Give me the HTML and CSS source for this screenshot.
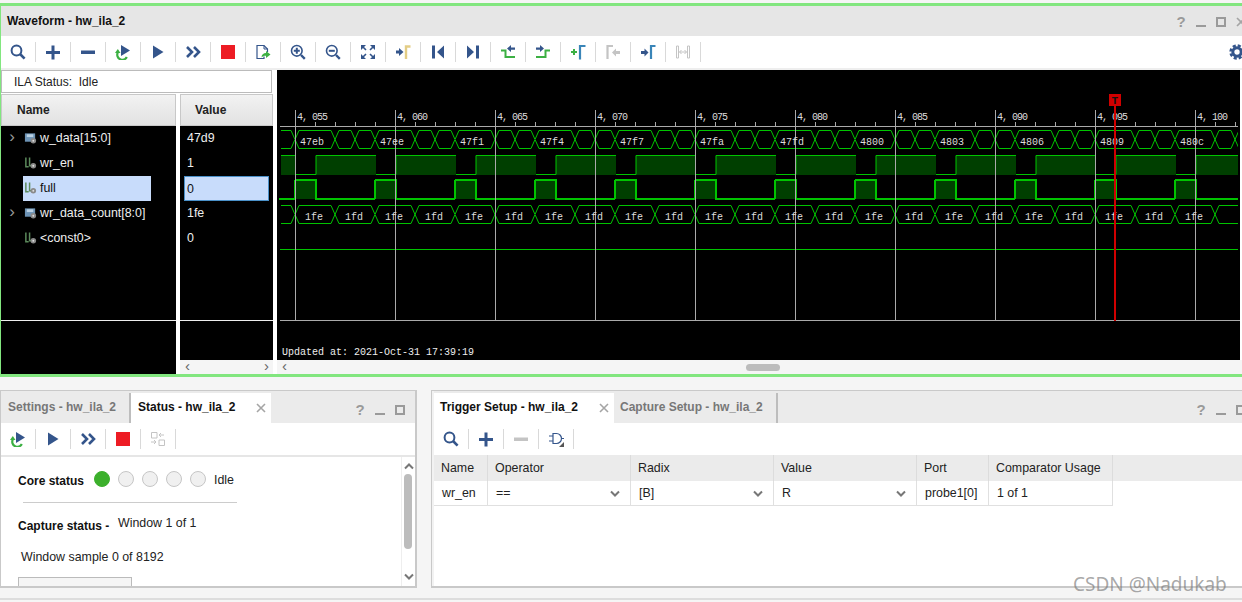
FILE: index.html
```html
<!DOCTYPE html>
<html lang="en">
<head>
<meta charset="utf-8">
<title>Waveform - hw_ila_2</title>
<link rel="stylesheet" href="styles.css">
</head>
<body>
<svg class="defs" width="0" height="0" aria-hidden="true">
  <defs>
    <symbol id="i-search" viewBox="0 0 16 16"><circle cx="6.5" cy="6.5" r="4.9" fill="none" stroke="#34558b" stroke-width="2"/><path d="M10 10l4.6 4.6" stroke="#34558b" stroke-width="2.6" fill="none"/></symbol>
    <symbol id="i-plus" viewBox="0 0 16 16"><path d="M1 7h14v3H1zM6.5 1.500h3v14h-3z" fill="#34558b"/></symbol>
    <symbol id="i-minus" viewBox="0 0 16 16"><path d="M1 6.500h14v3.500H1z" fill="#34558b"/></symbol>
    <symbol id="i-minus-off" viewBox="0 0 16 16"><path d="M1 6.500h14v3.500H1z" fill="#c4c4c4"/></symbol>
    <symbol id="i-rerun" viewBox="0 0 16 16"><path d="M6 1l9 5.500L6 12z" fill="#34558b"/><path d="M2.800 8.500a5 5 0 0 0 9 4.500" fill="none" stroke="#3cb043" stroke-width="2.200"/><path d="M0 9h5.500L2.800 5z" fill="#3cb043"/></symbol>
    <symbol id="i-play" viewBox="0 0 16 16"><path d="M3 1.500L13.500 8 3 14.500z" fill="#34558b"/></symbol>
    <symbol id="i-ffwd" viewBox="0 0 16 16"><path d="M2 3l5 5-5 5M9 3l5 5-5 5" fill="none" stroke="#34558b" stroke-width="2.600"/></symbol>
    <symbol id="i-stop" viewBox="0 0 16 16"><path d="M1 1h14v14H1z" fill="#ed1c24"/></symbol>
    <symbol id="i-export" viewBox="0 0 16 16"><path d="M9 12.500V14.500H2V1.500h7l3.500 3.500v3" fill="#fff" stroke="#34558b" stroke-width="1.200"/><path d="M9 1.500v3.500h3.500" fill="none" stroke="#34558b"/><path d="M6.500 13.500c0-3 2-4.500 4.500-4.500V7l4.500 3.500L11 14v-2.200c-2 0-3.500.5-4.500 1.700z" fill="#3cb043"/></symbol>
    <symbol id="i-zin" viewBox="0 0 16 16"><circle cx="6.800" cy="6.800" r="5.300" fill="none" stroke="#34558b" stroke-width="1.600"/><path d="M11 11l3.800 3.800" stroke="#34558b" stroke-width="2.400"/><path d="M3.800 5.800h6v2h-6zM5.800 3.800h2v6h-2z" fill="#34558b"/></symbol>
    <symbol id="i-zout" viewBox="0 0 16 16"><circle cx="6.800" cy="6.800" r="5.300" fill="none" stroke="#34558b" stroke-width="1.600"/><path d="M11 11l3.800 3.800" stroke="#34558b" stroke-width="2.400"/><path d="M3.800 5.800h6v2h-6z" fill="#34558b"/></symbol>
    <symbol id="i-fit" viewBox="0 0 16 16"><path d="M1 1h5L1 6zM15 1v5l-5-5zM1 15v-5l5 5zM15 15h-5l5-5z" fill="#34558b"/><path d="M3 3l3 3M13 3l-3 3M3 13l3-3M13 13l-3-3" stroke="#34558b" stroke-width="1.600"/></symbol>
    <symbol id="i-mark-tan" viewBox="0 0 16 16"><path d="M1 6.500h3V4l4.500 4L4 12V9.500H1z" fill="#34558b"/><path d="M11 15V2.500h4.500" fill="none" stroke="#e3cd86" stroke-width="2.400"/></symbol>
    <symbol id="i-first" viewBox="0 0 16 16"><path d="M2 1.500h3v13H2zM14 1.500v13L7 8z" fill="#34558b"/></symbol>
    <symbol id="i-last" viewBox="0 0 16 16"><path d="M11 1.500h3v13h-3zM2 1.500v13L9 8z" fill="#34558b"/></symbol>
    <symbol id="i-edge-prev" viewBox="0 0 16 16"><path d="M1 6.500h4.500V13H15" fill="none" stroke="#3cb043" stroke-width="2"/><path d="M15 3.500h-4V1L7 4.500 11 8V5.800h4z" fill="#34558b"/></symbol>
    <symbol id="i-edge-next" viewBox="0 0 16 16"><path d="M15 6.500h-4.500V13H1" fill="none" stroke="#3cb043" stroke-width="2"/><path d="M1 3.500h4V1l4 3.500L5 8V5.800H1z" fill="#34558b"/></symbol>
    <symbol id="i-add-mark" viewBox="0 0 16 16"><path d="M1 8h6M4 5v6" stroke="#3cb043" stroke-width="2"/><path d="M10 15.500V2h5.500" fill="none" stroke="#3a85b8" stroke-width="2.200"/></symbol>
    <symbol id="i-prev-mark" viewBox="0 0 16 16"><path d="M2.500 15V2H8" fill="none" stroke="#c4c4c4" stroke-width="2.200"/><path d="M15 7h-4V4.500L7 8.500l4 4V10h4z" fill="#c4c4c4"/></symbol>
    <symbol id="i-next-mark" viewBox="0 0 16 16"><path d="M1 7h3.500V4.500l4 4-4 4V10H1z" fill="#34558b"/><path d="M11 15V2h4.500" fill="none" stroke="#3a85b8" stroke-width="2.200"/></symbol>
    <symbol id="i-dist" viewBox="0 0 16 16"><path d="M1.500 2h2v12h-2zM12.500 2h2v12h-2z" fill="none" stroke="#c4c4c4"/><path d="M4.500 8h7M6.500 6l-2 2 2 2M9.500 6l2 2-2 2" fill="none" stroke="#c4c4c4"/></symbol>
    <symbol id="i-gear" viewBox="0 0 16 16"><circle cx="8" cy="8" r="4.200" fill="none" stroke="#34558b" stroke-width="3"/><circle cx="8" cy="8" r="6.500" fill="none" stroke="#34558b" stroke-width="2.400" stroke-dasharray="3.100 2"/></symbol>
    <symbol id="i-swap" viewBox="0 0 16 16"><path d="M1.500 1.500h5.500v5.500H1.500zM9 9h5.500v5.500H9z" fill="none" stroke="#c4c4c4"/><path d="M9 4h5M11 2l-2 2 2 2M1 11h5M4 9l2 2-2 2" fill="none" stroke="#c4c4c4"/></symbol>
    <symbol id="i-gate" viewBox="0 0 16 16"><path d="M5 2.500h3.500a5 5 0 0 1 0 10H5z" fill="none" stroke="#34558b" stroke-width="1.200"/><path d="M1 5h4M1 10h4M13.500 7.500H16" stroke="#34558b"/><path d="M16 16h-5l5-5z" fill="#555"/></symbol>
    <symbol id="i-bus" viewBox="0 0 14 14"><path d="M1 2h11v9H1z" fill="#6d93b5"/><path d="M3 3h7v3H3z" fill="#b9d0e2"/><circle cx="10" cy="10" r="3" fill="#8a8a8a"/><circle cx="10" cy="10" r="1" fill="#ddd"/></symbol>
    <symbol id="i-bit" viewBox="0 0 14 14"><path d="M2 1v10h3M6 1v9h3" fill="none" stroke="#5c8a5c" stroke-width="1.600"/><circle cx="10" cy="10" r="3" fill="#8a8a8a"/><circle cx="10" cy="10" r="1" fill="#ddd"/></symbol>
    <symbol id="i-close" viewBox="0 0 10 10"><path d="M1 1l8 8M9 1l-8 8" stroke="#a5a5a5" stroke-width="1.600"/></symbol>
    <symbol id="i-chev" viewBox="0 0 10 8"><path d="M1 1.500L5 5.500l4-4" fill="none" stroke="#777" stroke-width="2"/></symbol>
    <pattern id="p-data" patternUnits="userSpaceOnUse" x="295" y="0" width="80" height="400"><path class="w" d="M0 139.500L4 130.500H36L44 148.500H56L64 130.500H76L80 139.500M0 139.500L4 148.500H36L44 130.500H56L64 148.500H76L80 139.500"/></pattern>
    <pattern id="p-count" patternUnits="userSpaceOnUse" x="295" y="0" width="80" height="400"><path class="w" d="M0 214.500L4 205.500H36L44 223.500H76L80 214.500M0 214.500L4 223.500H36L44 205.500H76L80 214.500"/></pattern>
    <pattern id="p-en" patternUnits="userSpaceOnUse" x="296" y="0" width="80" height="400"><path class="fillw" d="M20 155h60v20H20z"/><path class="w" d="M0 174.500H20V155.500H80"/></pattern>
    <pattern id="p-full" patternUnits="userSpaceOnUse" x="295" y="0" width="80" height="400"><path class="fillw" d="M1 180h20v19H1z"/><path class="w2" d="M0 199V180H21V199H80"/><path class="w2" d="M80 199V180"/></pattern>
    <pattern id="p-major" patternUnits="userSpaceOnUse" x="295" y="0" width="100" height="400"><path class="grid" d="M.5 110V320"/></pattern>
    <pattern id="p-minor" patternUnits="userSpaceOnUse" x="295" y="0" width="20" height="400"><path class="grid" d="M.5 122V126"/></pattern>
  </defs>
</svg>

<main class="page">
  <section class="wave-panel">
    <header class="title-bar">
      <span class="title">Waveform - hw_ila_2</span>
      <div class="win-ctl win-ctl-top">
        <span class="q">?</span><span class="min"></span><span class="max"></span><svg class="x"><use href="#i-close"/></svg>
      </div>
    </header>
    <div class="toolbar toolbar-top">
      <button class="tb"><svg class="ic"><use href="#i-search"/></svg></button>
      <button class="tb"><svg class="ic"><use href="#i-plus"/></svg></button>
      <button class="tb"><svg class="ic"><use href="#i-minus"/></svg></button>
      <button class="tb"><svg class="ic"><use href="#i-rerun"/></svg></button>
      <button class="tb"><svg class="ic"><use href="#i-play"/></svg></button>
      <button class="tb"><svg class="ic"><use href="#i-ffwd"/></svg></button>
      <button class="tb"><svg class="ic"><use href="#i-stop"/></svg></button>
      <button class="tb"><svg class="ic"><use href="#i-export"/></svg></button>
      <button class="tb"><svg class="ic"><use href="#i-zin"/></svg></button>
      <button class="tb"><svg class="ic"><use href="#i-zout"/></svg></button>
      <button class="tb"><svg class="ic"><use href="#i-fit"/></svg></button>
      <button class="tb"><svg class="ic"><use href="#i-mark-tan"/></svg></button>
      <button class="tb"><svg class="ic"><use href="#i-first"/></svg></button>
      <button class="tb"><svg class="ic"><use href="#i-last"/></svg></button>
      <button class="tb"><svg class="ic"><use href="#i-edge-prev"/></svg></button>
      <button class="tb"><svg class="ic"><use href="#i-edge-next"/></svg></button>
      <button class="tb"><svg class="ic"><use href="#i-add-mark"/></svg></button>
      <button class="tb"><svg class="ic"><use href="#i-prev-mark"/></svg></button>
      <button class="tb"><svg class="ic"><use href="#i-next-mark"/></svg></button>
      <button class="tb"><svg class="ic"><use href="#i-dist"/></svg></button>
      <svg class="ic gear"><use href="#i-gear"/></svg>
    </div>
    <div class="wave-body">
      <div class="signals">
        <div class="ila-status">ILA Status:&nbsp; Idle</div>
        <div class="signal-cols">
          <div class="col col-name">
            <div class="col-head head-name">Name</div>
            <div class="col-rows col-rows-name">
              <div class="sig-row"><span class="twist">&#8250;</span><span class="sig"><svg class="sig-ic"><use href="#i-bus"/></svg>w_data[15:0]</span></div>
              <div class="sig-row"><span class="twist"></span><span class="sig"><svg class="sig-ic"><use href="#i-bit"/></svg>wr_en</span></div>
              <div class="sig-row"><span class="twist"></span><span class="sig sel"><svg class="sig-ic"><use href="#i-bit"/></svg>full</span></div>
              <div class="sig-row"><span class="twist">&#8250;</span><span class="sig"><svg class="sig-ic"><use href="#i-bus"/></svg>wr_data_count[8:0]</span></div>
              <div class="sig-row"><span class="twist"></span><span class="sig"><svg class="sig-ic"><use href="#i-bit"/></svg>&lt;const0&gt;</span></div>
            </div>
            <div class="col-foot col-foot-name"></div>
          </div>
          <div class="col col-value">
            <div class="col-head head-value">Value</div>
            <div class="col-rows">
              <div class="val-row">47d9</div>
              <div class="val-row">1</div>
              <div class="val-row val-sel">0</div>
              <div class="val-row">1fe</div>
              <div class="val-row">0</div>
            </div>
            <div class="col-foot col-foot-value"></div>
            <div class="hscroll"><span class="chev-l">&#8249;</span><span class="chev-r">&#8250;</span></div>
          </div>
        </div>
      </div>
      <div class="wave-col">
        <svg class="wave" viewBox="277 70 965 290" width="965" height="290">
          <rect class="black" x="277" y="70" width="963" height="290"/>
          <rect x="281" y="120" width="957" height="180" fill="url(#p-data)"/>
          <rect x="281" y="150" width="957" height="27" fill="url(#p-en)"/>
          <rect x="279" y="177" width="959" height="24" fill="url(#p-full)"/>
          <rect x="281" y="200" width="957" height="30" fill="url(#p-count)"/>
          <path class="w" d="M280 249.500H1238"/>
          <path class="axis" d="M280 126.500H1238M280 320.500H1240"/>
          <rect x="280" y="100" width="958" height="230" fill="url(#p-major)"/>
          <rect x="296" y="118" width="942" height="10" fill="url(#p-minor)"/>
          <g class="ruler">
            <text x="297" y="120">4, 055</text><text x="397" y="120">4, 060</text><text x="497" y="120">4, 065</text><text x="597" y="120">4, 070</text><text x="697" y="120">4, 075</text><text x="797" y="120">4, 080</text><text x="897" y="120">4, 085</text><text x="997" y="120">4, 090</text><text x="1097" y="120">4, 095</text><text x="1197" y="120">4, 100</text>
          </g>
          <g class="bus-text">
            <text x="300" y="145">47eb</text><text x="380" y="145">47ee</text><text x="460" y="145">47f1</text><text x="540" y="145">47f4</text><text x="620" y="145">47f7</text><text x="700" y="145">47fa</text><text x="780" y="145">47fd</text><text x="860" y="145">4800</text><text x="940" y="145">4803</text><text x="1020" y="145">4806</text><text x="1100" y="145">4809</text><text x="1180" y="145">480c</text>
            <text x="305" y="220">1fe</text><text x="345" y="220">1fd</text><text x="385" y="220">1fe</text><text x="425" y="220">1fd</text><text x="465" y="220">1fe</text><text x="505" y="220">1fd</text><text x="545" y="220">1fe</text><text x="585" y="220">1fd</text><text x="625" y="220">1fe</text><text x="665" y="220">1fd</text><text x="705" y="220">1fe</text><text x="745" y="220">1fd</text><text x="785" y="220">1fe</text><text x="825" y="220">1fd</text><text x="865" y="220">1fe</text><text x="905" y="220">1fd</text><text x="945" y="220">1fe</text><text x="985" y="220">1fd</text><text x="1025" y="220">1fe</text><text x="1065" y="220">1fd</text><text x="1105" y="220">1fe</text><text x="1145" y="220">1fd</text><text x="1185" y="220">1fe</text>
          </g>
          <rect class="red" x="1114" y="105" width="2" height="216"/>
          <rect class="red" x="1109" y="94" width="12" height="12"/>
          <text class="t-mark" x="1111.500" y="104">T</text>
          <text class="updated" x="282" y="355">Updated at: 2021-Oct-31 17:39:19</text>
        </svg>
        <div class="hscroll hscroll-wave"><span class="chev-l">&#8249;</span><span class="thumb-h"></span></div>
      </div>
    </div>
  </section>

  <div class="lower">
    <section class="pane pane-status">
      <header class="tab-bar">
        <span class="tab tab-settings">Settings - hw_ila_2</span>
        <span class="tab tab-active tab-status">Status - hw_ila_2<svg class="tab-x"><use href="#i-close"/></svg></span>
        <div class="win-ctl win-ctl-left"><span class="q">?</span><span class="min"></span><span class="max"></span></div>
      </header>
      <div class="toolbar toolbar-lower status-tools">
        <button class="tb"><svg class="ic"><use href="#i-rerun"/></svg></button>
        <button class="tb"><svg class="ic"><use href="#i-play"/></svg></button>
        <button class="tb"><svg class="ic"><use href="#i-ffwd"/></svg></button>
        <button class="tb"><svg class="ic"><use href="#i-stop"/></svg></button>
        <button class="tb"><svg class="ic"><use href="#i-swap"/></svg></button>
      </div>
      <div class="status-body">
        <div class="status-content">
          <div class="core-row">
            <b class="core-label">Core status</b>
            <span class="dot dot-on"></span><span class="dot"></span><span class="dot"></span><span class="dot"></span><span class="dot"></span>
            <span class="idle">Idle</span>
          </div>
          <div class="rule"></div>
          <div class="capture-row"><b class="capture-label">Capture status -</b><span class="capture-val">Window 1 of 1</span></div>
          <div class="sample">Window sample 0 of 8192</div>
          <div class="stub-btn"></div>
        </div>
        <div class="vscroll">
          <svg class="vs-up"><use href="#i-chev"/></svg>
          <span class="thumb-v"></span>
          <svg class="vs-down"><use href="#i-chev"/></svg>
        </div>
      </div>
    </section>

    <section class="pane pane-trigger">
      <header class="tab-bar">
        <span class="tab tab-active tab-trigger">Trigger Setup - hw_ila_2<svg class="tab-x"><use href="#i-close"/></svg></span>
        <span class="tab tab-capture">Capture Setup - hw_ila_2</span>
        <div class="win-ctl win-ctl-right"><span class="q">?</span><span class="min"></span><span class="max"></span></div>
      </header>
      <div class="toolbar toolbar-lower trigger-tools">
        <button class="tb"><svg class="ic"><use href="#i-search"/></svg></button>
        <button class="tb"><svg class="ic"><use href="#i-plus"/></svg></button>
        <button class="tb"><svg class="ic"><use href="#i-minus-off"/></svg></button>
        <button class="tb"><svg class="ic"><use href="#i-gate"/></svg></button>
      </div>
      <div class="table">
        <div class="t-head">
          <span class="th">Name</span><span class="th">Operator</span><span class="th">Radix</span><span class="th">Value</span><span class="th">Port</span><span class="th">Comparator Usage</span>
        </div>
        <div class="t-row">
          <span class="td">wr_en</span>
          <span class="td td-sel">==<svg class="sel-chev"><use href="#i-chev"/></svg></span>
          <span class="td td-sel">[B]<svg class="sel-chev"><use href="#i-chev"/></svg></span>
          <span class="td td-sel">R<svg class="sel-chev"><use href="#i-chev"/></svg></span>
          <span class="td">probe1[0]</span>
          <span class="td">1 of 1</span>
        </div>
      </div>
    </section>
  </div>
  <div class="foot-bar"></div>
  <span class="watermark">CSDN @Nadukab</span>
</main>
</body>
</html>
```

FILE: styles.css
```css
* { box-sizing: border-box; }
html, body { margin: 0; padding: 0; }
body {
  width: 1242px;
  height: 602px;
  overflow: hidden;
  background: #f5f5f5;
  font-family: "Liberation Sans", Arial, sans-serif;
  font-size: 12.400px;
  color: #111;
}
.defs { position: absolute; }
.page { position: relative; width: 1242px; height: 602px; padding-top: 3px; overflow: hidden; }

/* ---------- top waveform window ---------- */
.wave-panel {
  height: 374px;
  border-top: 3px solid #82e67f;
  border-bottom: 3px solid #82e67f;
  border-left: 1px solid #82e67f;
  background: #fff;
  overflow: hidden;
}
.title-bar {
  height: 30px;
  background: #e6e6e6;
  display: flex;
  align-items: center;
  padding-left: 6px;
  padding-bottom: 1px;
}
.title { font-weight: bold; font-size: 12px; color: #111; }

.win-ctl { margin-left: auto; display: flex; align-items: center; gap: 10px; padding-top: 3px; }
.win-ctl-top { margin-right: -4px; }
.win-ctl-left { margin-right: 10px; }
.win-ctl-right { margin-right: -4px; }
.q {
  width: 10px;
  height: 12px;
  line-height: 12px;
  text-align: center;
  font-size: 15px;
  font-weight: bold;
  color: #9a9a9a;
}
.min { width: 10px; height: 10px; border-bottom: 2px solid #9a9a9a; }
.max { width: 10px; height: 10px; border: 2px solid #9a9a9a; }
.x { width: 10px; height: 10px; display: block; }

.toolbar { display: flex; align-items: center; background: #fff; }
.toolbar-top { height: 34px; border-bottom: 2px solid #eee; }
.toolbar-lower { height: 32px; flex: none; }
.tb {
  width: 35px;
  height: 20px;
  padding: 0;
  border: 0;
  border-right: 1px solid #d9d9d9;
  background: transparent;
  display: flex;
  align-items: center;
  justify-content: center;
}
.ic { width: 16px; height: 16px; display: block; }
.gear { margin-left: auto; margin-right: -3px; }

.wave-body { display: flex; height: 304px; }
.signals { width: 272px; flex: none; }
.ila-status {
  height: 23px;
  margin-right: 1px;
  border: 1px solid #bbb;
  padding-left: 12px;
  line-height: 22px;
  font-size: 12px;
  color: #222;
}
.signal-cols { display: flex; gap: 4px; margin-top: 1px; }
.col { display: flex; flex-direction: column; height: 280px; }
.col-name { width: 175px; }
.col-value { width: 93px; }
.col-head {
  height: 32px;
  flex: none;
  border: 1px solid #c8c8c8;
  background: linear-gradient(#f2f2f2, #e2e2e2);
  font-weight: bold;
  font-size: 12px;
  line-height: 30px;
  color: #222;
}
.head-name { padding-left: 15px; }
.head-value { padding-left: 14px; }
.col-rows { height: 195px; flex: none; background: #000; border-bottom: 1px solid #eee; }
.col-foot { background: #000; }
.col-foot-name { height: 53px; }
.col-foot-value { height: 39px; }

.sig-row { height: 25px; display: flex; color: #eee; }
.twist { width: 22px; flex: none; text-align: center; font-size: 17px; line-height: 22px; color: #999; }
.sig { width: 128px; flex: none; display: flex; align-items: center; gap: 3px; padding-left: 1px; padding-bottom: 1px; white-space: nowrap; }
.sel { background: #c8dcfb; color: #111; }
.sig-ic { width: 13px; height: 14px; display: block; flex: none; }

.val-row { height: 25px; padding-left: 7px; line-height: 24px; color: #eee; }
.val-sel {
  width: 85px;
  margin-left: 4px;
  padding-left: 2px;
  background: #c8dcfb;
  border: 1px solid #4a90c8;
  color: #111;
}

.hscroll {
  height: 14px;
  flex: none;
  position: relative;
  background: #f5f5f5;
  font-size: 15px;
  line-height: 12px;
  color: #666;
  display: flex;
  justify-content: space-between;
  padding: 0 4px 0 5px;
}
.wave-col { width: 965px; margin-left: 4px; flex: none; }
.wave { display: block; }
.hscroll-wave { justify-content: flex-start; }
.thumb-h {
  position: absolute;
  left: 469px;
  top: 4px;
  width: 34px;
  height: 7px;
  border-radius: 4px;
  background: #bcbcbc;
}

/* waveform drawing */
.black { fill: #000; }
.w { fill: none; stroke: #00c400; stroke-width: 1; }
.w2 { fill: none; stroke: #00c400; stroke-width: 2; }
.fillw { fill: #003f00; }
.grid { fill: none; stroke: #aaa; stroke-width: 1; }
.axis { fill: none; stroke: #aaa; stroke-width: 1; }
.red { fill: #d00000; }
.ruler text, .bus-text text, .updated, .t-mark { font-family: "Liberation Mono", "DejaVu Sans Mono", monospace; }
.ruler text { font-size: 10px; letter-spacing: -1px; fill: #ddd; }
.bus-text text { font-size: 10px; fill: #ddd; }
.updated { font-size: 10px; fill: #eee; }
.t-mark { font-size: 11px; font-weight: bold; fill: #111; }

/* ---------- lower panes ---------- */
.lower { display: flex; gap: 14px; margin-top: 13px; height: 198px; }
.pane {
  height: 198px;
  border: 1px solid #c9c9c9;
  border-right: 0;
  display: flex;
  flex-direction: column;
  overflow: hidden;
}
.pane-status { width: 417px; flex: none; border-right: 2px solid #c9c9c9; border-bottom-width: 2px; }
.pane-trigger { flex: 1; min-width: 0; padding-left: 2px; background: #f2f2f2; border-bottom-width: 2px; }

.tab-bar {
  height: 32px;
  flex: none;
  background: #ebebeb;
  display: flex;
  align-items: flex-end;
}
.tab-bar .win-ctl { align-self: center; padding-top: 5px; }
.tab { height: 30px; font-weight: bold; font-size: 12px; line-height: 28px; white-space: nowrap; }
.tab-settings { width: 130px; padding-left: 7px; color: #777; border-right: 2px solid #bdbdbd; }
.tab-active { position: relative; background: #fff; color: #111; padding-left: 7px; }
.tab-status { width: 140px; }
.tab-trigger { width: 180px; padding-left: 6px; }
.tab-capture { width: 164px; padding-left: 6px; color: #777; border-right: 2px solid #bdbdbd; }
.tab-x { position: absolute; right: 5px; top: 10px; width: 10px; height: 10px; }

.status-tools { border-bottom: 2px solid #e6e6e6; height: 34px; }
.status-body { flex: 1; display: flex; min-height: 0; background: #fff; }
.status-content { flex: 1; overflow: hidden; padding-top: 13px; padding-left: 17px; }
.core-row { display: flex; align-items: center; height: 18px; }
.core-label { width: 76px; padding-top: 4px; flex: none; font-size: 12px; color: #111; }
.dot {
  width: 16px;
  height: 16px;
  margin-left: 0;
  margin-right: 8px;
  border-radius: 50%;
  border: 1px solid #c6c6c6;
  background: #f0f0f0;
  flex: none;
}
.dot-on { background: #3cb02c; border-color: #3cb02c; }
.idle { margin-left: 0; padding-top: 1px; margin-right: 0; color: #222; }
.rule { width: 214px; margin: 14px 0 0 5px; border-top: 1px solid #ccc; }
.capture-row { display: flex; height: 16px; margin-top: 13px; }
.capture-label { width: 100px; flex: none; padding-top: 3px; font-size: 12px; }
.capture-val { margin-top: 0; color: #222; }
.sample { margin: 18px 0 0 3px; color: #222; }
.stub-btn { width: 114px; height: 20px; margin-top: 13px; border: 1px solid #bbb; background: #f5f5f5; }

.vscroll { width: 14px; flex: none; position: relative; border-left: 1px solid #eee; }
.vs-up { position: absolute; left: 2px; top: 5px; width: 10px; height: 8px; transform: rotate(180deg); }
.vs-down { position: absolute; left: 2px; bottom: 5px; width: 10px; height: 8px; }
.thumb-v {
  position: absolute;
  left: 2px;
  top: 17px;
  width: 8px;
  height: 75px;
  border-radius: 4px;
  background: #bcbcbc;
}

.trigger-tools { flex: none; height: 32px; }
.table { flex: 1; background: #fff; }
.t-head { display: grid; grid-template-columns: 54px 143px 143px 143px 72px 124px; height: 26px; background: #ebebeb; }
.t-row {
  display: grid;
  grid-template-columns: 54px 143px 143px 143px 72px 124px;
  width: 679px;
  height: 25px;
  border-bottom: 1px solid #e0e0e0;
}
.th { padding-left: 7px; line-height: 27px; border-right: 1px solid #dcdcdc; color: #222; white-space: nowrap; }
.td { position: relative; padding-left: 8px; line-height: 24px; border-right: 1px solid #e0e0e0; color: #222; white-space: nowrap; }
.sel-chev { position: absolute; right: 10px; top: 9px; width: 10px; height: 8px; }

.foot-bar { height: 2px; margin-top: 10px; background: #ddd; }
.watermark {
  position: absolute;
  left: 1073px;
  top: 573px;
  font-family: "Noto Sans", "Liberation Sans", sans-serif;
  font-size: 19px;
  line-height: 22px;
  color: rgba(120, 120, 120, .65);
  white-space: nowrap;
}
```
